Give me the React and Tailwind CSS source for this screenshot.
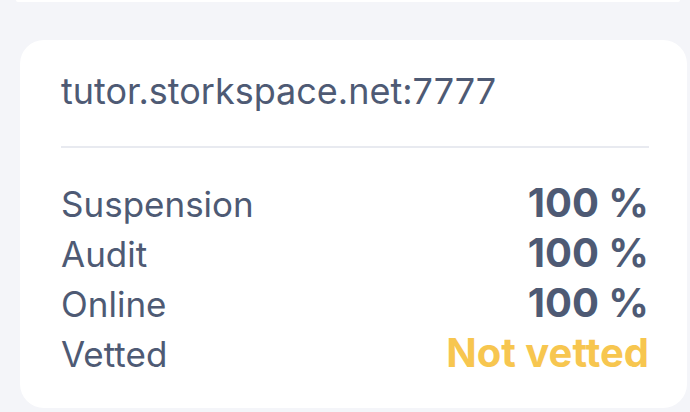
export default function App() {
  const rows = [
    { label: "Suspension", value: "100 %" },
    { label: "Audit", value: "100 %" },
    { label: "Online", value: "100 %" },
    { label: "Vetted", value: "Not vetted", warn: true },
  ];

  return (
    <div className="w-[690px] h-[412px] bg-[#f4f5f9] overflow-hidden font-['Inter',sans-serif] text-[#4e5a74]">
      <div className="h-[2px] ml-[16px] w-[664px] bg-white rounded-b-sm" />

      <div className="mt-[38px] ml-[20px] w-[667px] h-[368px] bg-white rounded-3xl pl-[41px] pr-[38px] pt-[29px]">
        <h2 className="text-[36px] leading-[44px] font-normal">
          tutor.storkspace.net:7777
        </h2>

        <div className="mt-[33px] h-[2px] bg-[#e8eaf0]" />

        <div className="mt-[30px] flex flex-col">
          {rows.map((r) => (
            <div key={r.label} className="flex items-baseline justify-between h-[50px] leading-[50px]">
              <span className="text-[35px] font-normal">{r.label}</span>
              <span className={r.warn ? "text-[40px] font-bold text-[#f7c64f]" : "text-[40px] font-bold"}>
                {r.value}
              </span>
            </div>
          ))}
        </div>
      </div>
    </div>
  );
}
